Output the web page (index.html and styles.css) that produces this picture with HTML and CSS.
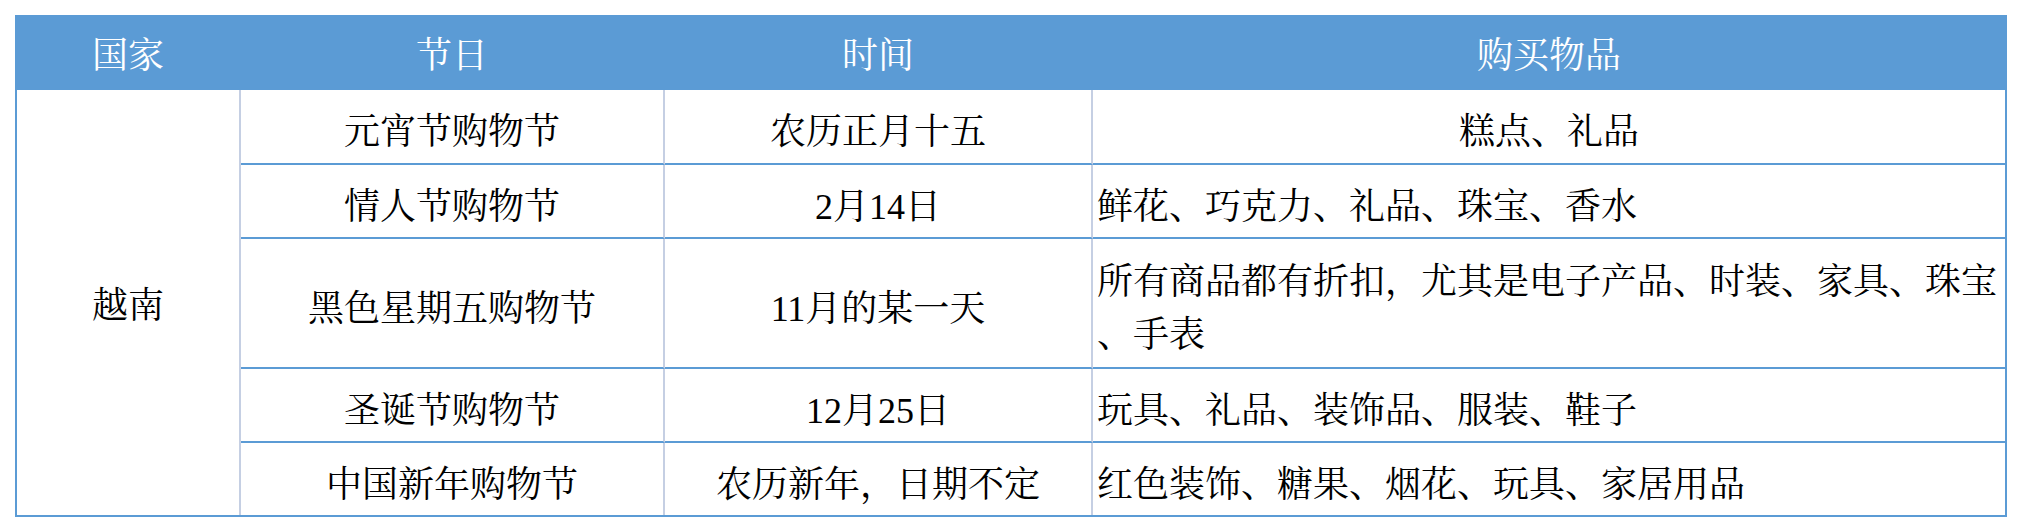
FILE: index.html
```html
<!DOCTYPE html>
<html lang="zh-CN">
<head>
<meta charset="utf-8">
<title>购物节</title>
<link rel="stylesheet" href="styles.css">
</head>
<body>
<table class="fest">
  <colgroup>
    <col class="c1">
    <col class="c2">
    <col class="c3">
    <col class="c4">
  </colgroup>
  <thead>
    <tr class="head">
      <th>国家</th>
      <th>节日</th>
      <th>时间</th>
      <th>购买物品</th>
    </tr>
  </thead>
  <tbody>
    <tr class="r1">
      <td class="country" rowspan="5">越南</td>
      <td class="mid">元宵节购物节</td>
      <td class="mid">农历正月十五</td>
      <td class="items mid last">糕点、礼品</td>
    </tr>
    <tr class="r2">
      <td class="mid">情人节购物节</td>
      <td class="mid">2月14日</td>
      <td class="items last">鲜花、巧克力、礼品、珠宝、香水</td>
    </tr>
    <tr class="r3">
      <td class="mid">黑色星期五购物节</td>
      <td class="mid">11月的某一天</td>
      <td class="items last">所有商品都有折扣，尤其是电子产品、时装、家具、珠宝<br>、手表</td>
    </tr>
    <tr class="r4">
      <td class="mid">圣诞节购物节</td>
      <td class="mid">12月25日</td>
      <td class="items last">玩具、礼品、装饰品、服装、鞋子</td>
    </tr>
    <tr class="r5 final">
      <td class="mid">中国新年购物节</td>
      <td class="mid">农历新年，日期不定</td>
      <td class="items last">红色装饰、糖果、烟花、玩具、家居用品</td>
    </tr>
  </tbody>
</table>
</body>
</html>
```
FILE: styles.css
```css
html, body {
  margin: 0;
  padding: 0;
  background: #ffffff;
}
body {
  padding: 15px;
  font-family: "Liberation Serif", "Noto Serif CJK SC", "Noto Sans CJK SC", serif;
  font-size: 36px;
  color: #000000;
}
.fest {
  border-collapse: separate;
  border-spacing: 0;
  table-layout: fixed;
  width: 1992px;
  border-left: 2px solid #5b9bd5;
  border-right: 2px solid #5b9bd5;
  border-bottom: 2px solid #5b9bd5;
}
.c1 { width: 224px; }
.c2 { width: 424px; }
.c3 { width: 428px; }
.c4 { width: 912px; }

.head { height: 75px; }
.r1 { height: 75px; }
.r2 { height: 74px; }
.r3 { height: 130px; }
.r4 { height: 74px; }
.r5 { height: 72px; }

.fest th {
  background: #5b9bd5;
  color: #ffffff;
  font-weight: normal;
  line-height: 53px;
  padding: 8px 0 0;
  text-align: center;
  vertical-align: middle;
  border-right: 2px solid #5b9bd5;
  box-sizing: border-box;
  white-space: nowrap;
}
.fest th:last-child { border-right: 0; }

.fest td {
  line-height: 53px;
  padding: 12px 0 0;
  border-right: 2px solid #c5cfe3;
  border-bottom: 2px solid #5b9bd5;
  box-sizing: border-box;
  vertical-align: middle;
  white-space: nowrap;
}
.fest td.mid { text-align: center; }
.fest td.country {
  text-align: center;
  padding-top: 8px;
  border-bottom: 0;
}
.fest td.items {
  text-align: left;
  padding-left: 4px;
}
.fest td.items.mid {
  text-align: center;
  padding-left: 0;
}
.fest td.last { border-right: 0; }
.fest tr.final td { border-bottom: 0; }
```
